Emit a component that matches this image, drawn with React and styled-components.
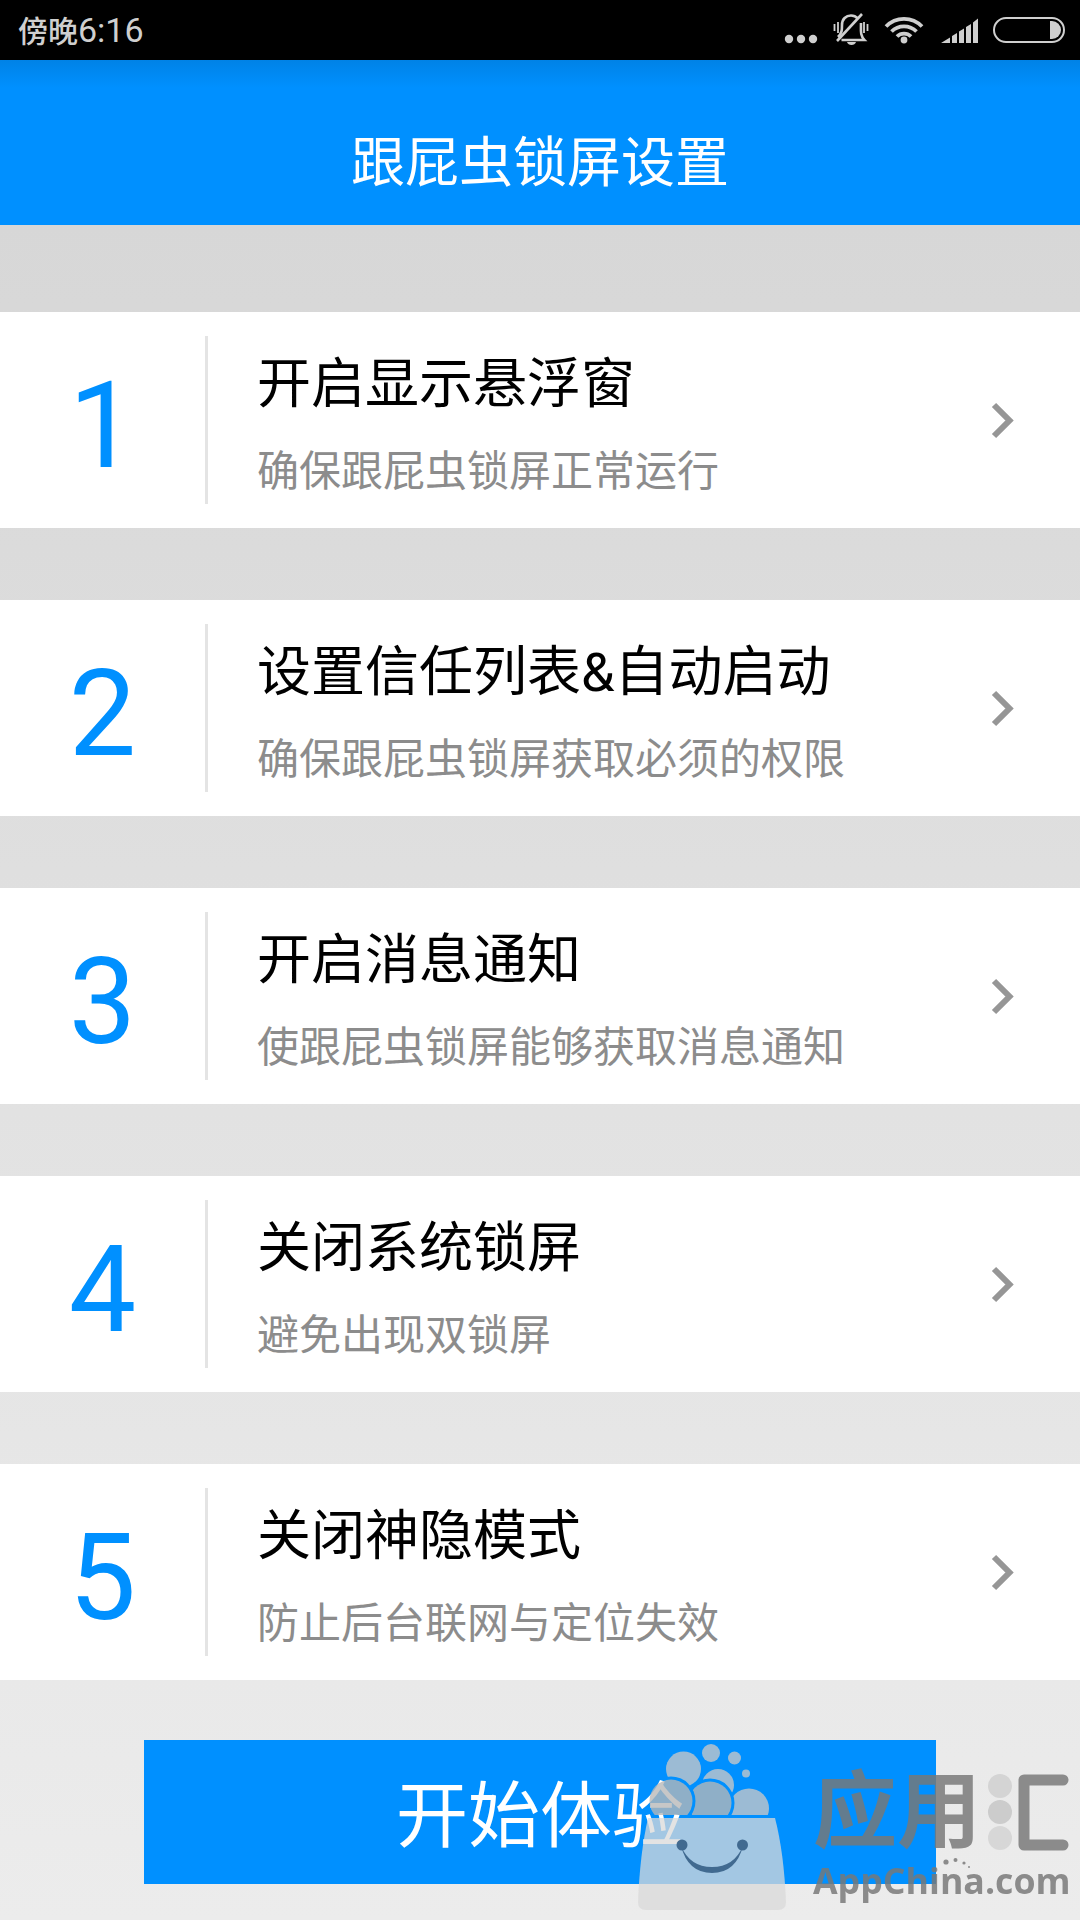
import React from "react";
import styled, { createGlobalStyle } from "styled-components";

const GlobalStyle = createGlobalStyle`
  * {
    box-sizing: border-box;
  }
  body {
    margin: 0;
    font-family: Roboto, "Noto Sans CJK SC", sans-serif;
  }
`;

const Screen = styled.div`
  position: relative;
  width: 1080px;
  height: 1920px;
  overflow: hidden;
  display: flex;
  flex-direction: column;
  background: linear-gradient(#d7d7d7 225px, #ececec 1920px);
`;

const StatusBar = styled.div`
  height: 60px;
  padding: 0 15px 0 18px;
  display: flex;
  justify-content: space-between;
  background: #000000;
  color: #cfcfcf;
`;

const Clock = styled.div`
  font-size: 34px;
  line-height: 60px;
`;

const CJK = styled.span`
  font-size: 30px;
  font-weight: 500;
`;

const Header = styled.div`
  height: 165px;
  background: linear-gradient(#0082e6, #0090ff 28px);
  color: #ffffff;
  font-size: 54px;
  line-height: 208px;
  text-align: center;
`;

const List = styled.div`
  display: flex;
  flex-direction: column;
  gap: 72px;
  margin-top: 87px;
`;

const Row = styled.div`
  height: 216px;
  padding: 24px 59px 24px 0;
  display: flex;
  align-items: center;
  background: #ffffff;
`;

const Number = styled.div`
  width: 208px;
  height: 168px;
  border-right: 3px solid #e4e4e4;
  color: #0090ff;
  font-size: 120px;
  line-height: 180px;
  text-align: center;
`;

const Info = styled.div`
  flex: 1;
  padding: 7px 0 0 49px;
`;

const Title = styled.div`
  color: #000000;
  font-size: 54px;
  line-height: 80px;
`;

const Desc = styled.div`
  margin-top: 16px;
  color: #8c8c8c;
  font-size: 42px;
  line-height: 62px;
`;

const StartButton = styled.button`
  width: 792px;
  height: 144px;
  margin: 60px auto 0;
  padding: 10px 0 0;
  border: none;
  background: #0090ff;
  color: #ffffff;
  font-family: inherit;
  font-size: 72px;
  line-height: 132px;
`;

const Watermark = styled.div`
  position: absolute;
  left: 636px;
  top: 1740px;
  width: 444px;
  height: 180px;
  display: flex;
`;

const Brand = styled.div`
  position: relative;
  padding: 27px 0 0 25px;
  color: #787878;
  opacity: 0.83;
`;

const BrandName = styled.div`
  height: 90px;
  display: flex;
  gap: 4px;
  font-size: 84px;
  font-weight: 700;
  line-height: 92px;
`;

const BrandMark = styled.svg`
  flex-shrink: 0;
  margin-left: 3px;
`;

const BrandUrl = styled.div`
  font-family: "Open Sans", sans-serif;
  font-size: 35.7px;
  font-weight: 700;
  line-height: 46px;
`;

const Sparkle = styled.svg`
  position: absolute;
  left: 152px;
  top: 114px;
`;

const steps = [
  { title: "开启显示悬浮窗", desc: "确保跟屁虫锁屏正常运行" },
  { title: "设置信任列表&自动启动", desc: "确保跟屁虫锁屏获取必须的权限" },
  { title: "开启消息通知", desc: "使跟屁虫锁屏能够获取消息通知" },
  { title: "关闭系统锁屏", desc: "避免出现双锁屏" },
  { title: "关闭神隐模式", desc: "防止后台联网与定位失效" },
];

const StatusIcons = () => (
  <svg width="300" height="60" viewBox="765 0 300 60" fill="none" stroke="#cfcfcf">
    <g fill="#cfcfcf" stroke="none">
      <circle cx="789" cy="39" r="4.2" />
      <circle cx="801" cy="39" r="4.2" />
      <circle cx="813" cy="39" r="4.2" />
    </g>
    {/* muted bell */}
    <path d="M838 37c4-4 4-7 4-12 0-6 4-9.500 9-9.500 3 0 5 1 7 3M861 23c0 8-1 12 3.500 17h-23" strokeWidth="2.6" />
    <path d="M837 41L862 14" strokeWidth="2.6" />
    <path d="M847 42h9c-1 4-8 4-9 0z" fill="#cfcfcf" stroke="none" />
    <path d="M834.500 24v7M838 22v11M864 22v11M867.500 24v7" strokeWidth="1.800" />
    {/* wifi */}
    <path d="M886 26.500a25 25 0 0 1 36 0M891.500 31.500a18 18 0 0 1 25 0M897 36.500a10 10 0 0 1 14 0" strokeWidth="3.800" />
    <circle cx="904" cy="40" r="3.400" fill="#cfcfcf" stroke="none" />
    {/* signal */}
    <path
      d="M941 43l9-5.500v5.500zM952 36l5-3v10h-5zM959 31.500l5-3v14.500h-5zM966 27l5-3v19h-5zM973 22.500l5-4v24.500h-5z"
      fill="#cfcfcf"
      stroke="none"
    />
    {/* battery */}
    <rect x="994" y="18" width="70" height="24" rx="12" strokeWidth="2" />
    <path d="M1050 21h2a9 9 0 0 1 0 18h-2z" fill="#cfcfcf" stroke="none" />
  </svg>
);

const Chevron = () => (
  <svg width="36" height="48" viewBox="0 0 36 48" fill="none">
    <path d="M9 9l15.500 15.500L9 40" stroke="#969696" strokeWidth="6" />
  </svg>
);

const Bag = () => (
  <svg width="152" height="172" viewBox="636 1740 152 172">
    <defs>
      {/* each front bubble leaves a thin gap around itself */}
      <mask id="behindLeft" maskUnits="userSpaceOnUse" x="636" y="1740" width="152" height="75">
        <rect x="636" y="1740" width="152" height="75" fill="#fff" />
        <circle cx="671" cy="1801" r="24.500" fill="#000" />
      </mask>
      <mask id="behindMiddle" maskUnits="userSpaceOnUse" x="636" y="1740" width="152" height="75">
        <rect x="636" y="1740" width="152" height="75" fill="#fff" />
        <circle cx="671" cy="1801" r="24.500" fill="#000" />
        <circle cx="710" cy="1803" r="24.500" fill="#000" />
      </mask>
      <clipPath id="aboveBag">
        <rect x="636" y="1740" width="152" height="75" />
      </clipPath>
    </defs>
    <g fill="#c8c8c8" opacity="0.78">
      <circle cx="711" cy="1753" r="9" />
      <circle cx="734.500" cy="1758" r="6.500" />
      <circle cx="746" cy="1773.500" r="4" />
      <g mask="url(#behindMiddle)">
        <circle cx="683.500" cy="1769" r="17.500" />
        <circle cx="718" cy="1785" r="16" />
        <circle cx="749" cy="1808.500" r="20" />
      </g>
      <g fill="#b8b8b8">
        <circle cx="710" cy="1803" r="21.500" mask="url(#behindLeft)" />
        <circle cx="671" cy="1801" r="21.500" clipPath="url(#aboveBag)" />
      </g>
    </g>
    <path
      d="M648 1818h127q9 35 11 84 0 8-8 8H646q-8 0-8-8 2-49 10-84z"
      fill="#d9d9d9"
      opacity="0.75"
    />
    <path d="M681 1846q7 27 31 27t31-27q-9 21-31 21t-31-21z" fill="#416a90" />
    <circle cx="682" cy="1845" r="5.500" fill="#416a90" />
    <circle cx="742.500" cy="1845" r="5.500" fill="#416a90" />
  </svg>
);

const App = () => {
  return (
    <Screen>
      <GlobalStyle />
      <StatusBar>
        <Clock>
          <CJK>傍晚</CJK>6:16
        </Clock>
        <StatusIcons />
      </StatusBar>
      <Header>跟屁虫锁屏设置</Header>
      <List>
        {steps.map((step, i) => (
          <Row key={step.title}>
            <Number>{i + 1}</Number>
            <Info>
              <Title>{step.title}</Title>
              <Desc>{step.desc}</Desc>
            </Info>
            <Chevron />
          </Row>
        ))}
      </List>
      <StartButton>开始体验</StartButton>
      <Watermark>
        <Bag />
        <Brand>
          <BrandName>
            应用
            <BrandMark width="82" height="92" viewBox="0 0 82 92">
              <circle cx="12" cy="19" r="12" fill="#d0d0d0" />
              <circle cx="12" cy="45" r="12" fill="#c6c6c6" />
              <circle cx="12" cy="71" r="12" fill="#d4d4d4" />
              <path
                d="M75 13H36v65h39"
                fill="none"
                stroke="#787878"
                strokeWidth="11"
                strokeLinecap="round"
                strokeLinejoin="round"
              />
            </BrandMark>
          </BrandName>
          <BrandUrl>AppChina.com</BrandUrl>
          <Sparkle width="36" height="16" viewBox="0 0 36 16" fill="#787878">
            <circle cx="6" cy="8" r="2.600" />
            <circle cx="15.500" cy="6" r="2" />
            <circle cx="24" cy="9" r="1.600" />
            <circle cx="29" cy="13" r="1" />
          </Sparkle>
        </Brand>
      </Watermark>
    </Screen>
  );
};

export default App;
